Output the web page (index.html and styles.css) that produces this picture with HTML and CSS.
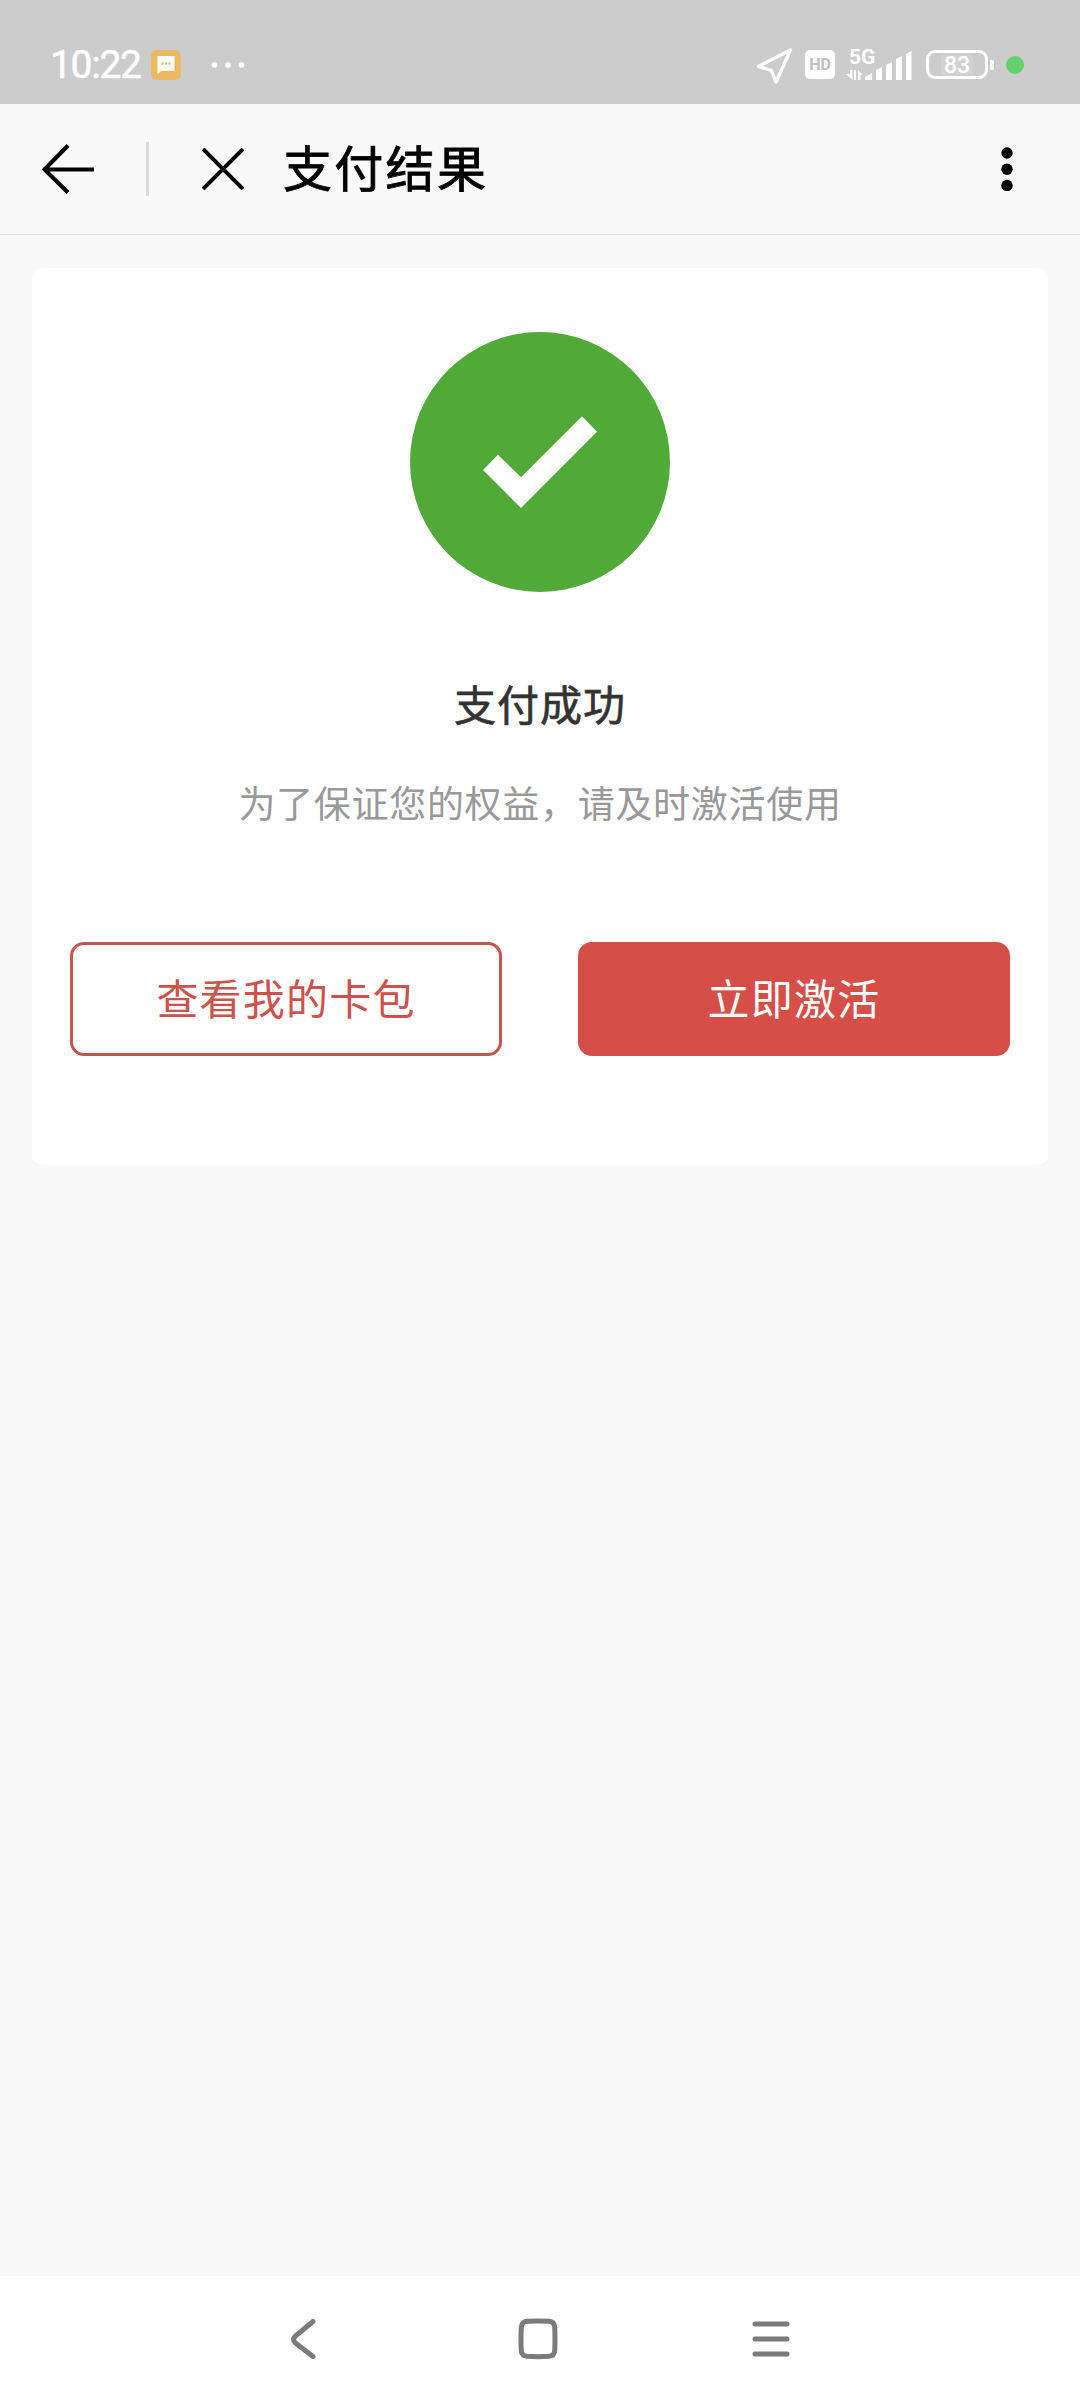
FILE: index.html
```html
<!DOCTYPE html>
<html lang="zh-CN">
<head>
<meta charset="utf-8">
<title>支付结果</title>
<link rel="stylesheet" href="styles.css">
</head>
<body>
<div class="screen">
  <div class="status">
    <span class="time">10:22</span>
    <svg class="message" width="30" height="30" viewBox="0 0 30 30"><rect width="30" height="30" rx="6" fill="#ebb960"/><path d="M6.5 6h17v15h-13l-4 3z" fill="#fff"/><g fill="#ddb978"><circle cx="11.5" cy="13.5" r="1.2"/><circle cx="15" cy="13.5" r="1.2"/><circle cx="18.5" cy="13.5" r="1.2"/></g></svg>
    <svg class="more-dots" width="34" height="8" viewBox="0 0 34 8" fill="#fff"><circle cx="3.5" cy="4" r="2.800"/><circle cx="17" cy="4" r="2.800"/><circle cx="30.500" cy="4" r="2.800"/></svg>
    <svg class="location" width="38" height="38" viewBox="0 0 38 38" fill="none" stroke="#fff" stroke-width="3.400" stroke-linejoin="round"><path d="M34.500 3L2.500 19.500L15.500 23.500L20 35Z"/></svg>
    <span class="hd">HD</span>
    <div class="network">
      <span class="generation">5G</span>
      <svg width="66" height="30" viewBox="0 0 66 30" fill="#fff"><path d="M4 19h2.500v10L0 23h4zM8 29V19h2v10zM12 29V19l5 5h-2.500v5z"/><path d="M19 29v-3l7-4v7zM30 29V19l6-3v13zM40 29V14l6-3v18zM50 29V8l6-3v24zM60 29V3l5.500-3v29z"/></svg>
    </div>
    <div class="battery"><span>83</span></div>
    <span class="tip"></span>
    <span class="indicator"></span>
  </div>
  <header class="header">
    <svg class="back" width="54" height="50" viewBox="0 0 54 50" fill="none" stroke="#000" stroke-width="4"><path d="M27 1.500L3.500 25.500L27 48.500M3.500 25.500H53"/></svg>
    <span class="divider"></span>
    <svg class="close" width="42" height="42" viewBox="0 0 42 42" stroke="#000" stroke-width="4"><path d="M1 1L41 41M41 1L1 41"/></svg>
    <h1 class="title">支付结果</h1>
    <svg class="menu" width="12" height="44" viewBox="0 0 12 44"><circle cx="6" cy="6" r="5.700"/><circle cx="6" cy="22.200" r="5.700"/><circle cx="6" cy="38.500" r="5.700"/></svg>
  </header>
  <main class="content">
    <section class="card">
      <svg class="success" width="260" height="260" viewBox="0 0 260 260"><circle cx="130" cy="130" r="130" fill="#51a937"/><path d="M73 138L88 122.700L111 145.300L172 84.300L187 99.700L111 176z" fill="#fff"/></svg>
      <h2 class="result">支付成功</h2>
      <p class="hint">为了保证您的权益，请及时激活使用</p>
      <div class="actions">
        <button class="button outline">查看我的卡包</button>
        <button class="button primary">立即激活</button>
      </div>
    </section>
  </main>
  <nav class="nav">
    <svg width="40" height="42" viewBox="0 0 40 42"><path d="M29 3.500L11.500 18Q7.500 21.500 11.500 25L29 38.500"/></svg>
    <svg width="42" height="42" viewBox="0 0 42 42"><path d="M10 3.300Q21 2.500 32 3.300Q37.200 3.800 37.700 9Q38.300 21 37.700 33Q37.200 37.800 32 38.300Q21 39 10 38.300Q4.800 37.800 4.300 33Q3.700 21 4.300 9Q4.800 3.800 10 3.300Z"/></svg>
    <svg width="40" height="42" viewBox="0 0 40 42"><path d="M4 6H36M4 21H36M4 36H36"/></svg>
  </nav>
</div>
</body>
</html>
```
FILE: styles.css
```css
* { box-sizing: border-box; }
body { margin: 0; font-family: "Noto Sans CJK SC", sans-serif; }
svg { display: block; flex-shrink: 0; }
.screen { width: 1080px; height: 2403px; display: flex; flex-direction: column; background: #f9f9f9; overflow: hidden; }
.status { height: 104px; padding: 25px 56px 0 50px; display: flex; align-items: center; background: #ccc; color: #fff; font-family: Roboto, sans-serif; }
.time { width: 101px; font-size: 39px; line-height: 40px; letter-spacing: -1.300px; font-weight: 400; -webkit-text-stroke: .5px #fff; }
.more-dots { margin-left: 30px; }
.location { margin-left: 511px; margin-top: 3px; }
.hd { width: 30px; height: 29px; margin-left: 11px; border-radius: 5px; background: #fff; color: #c0c0c0; font: 700 16px/29px Roboto, sans-serif; text-align: center; }
.network { width: 66px; height: 32px; margin-left: 11px; display: grid; align-items: end; }
.network > * { grid-area: 1 / 1; }
.generation { align-self: start; padding-left: 3px; font: 700 21px/16px Roboto, sans-serif; }
.battery { width: 62px; height: 29px; margin-left: 14px; border: 3px solid #fff; border-radius: 9px; display: flex; align-items: center; justify-content: center; font: 500 23px/24px Roboto, sans-serif; }
.battery span { background: #d2d2d2; padding: 0 3px; height: 20px; line-height: 21px; }
.tip { width: 4px; height: 10px; margin-left: 2px; border-radius: 0 2px 2px 0; background: #fff; }
.indicator { width: 18px; height: 18px; margin-left: 12px; border-radius: 50%; background: #65d16e; }
.header { height: 131px; padding: 0 67px 0 41px; display: flex; align-items: center; border-bottom: 1px solid #dedede; }
.divider { width: 3px; height: 54px; margin-left: 51px; background: #dadada; }
.close { margin-left: 53px; }
.title { margin: 0 auto 6px 39px; font-size: 49px; line-height: 72px; font-weight: 400; -webkit-text-stroke: .8px #000; letter-spacing: 2.300px; color: #000; }
.content { flex: 1; padding: 33px 32px; }
.card { height: 897px; padding: 64px 38px 0; display: flex; flex-direction: column; align-items: center; border-radius: 10px; background: #fff; }
.result { margin: 79px 0 0; font-size: 42px; line-height: 64px; font-weight: 400; -webkit-text-stroke: .7px #333; letter-spacing: 1px; color: #333; }
.hint { margin: 39px 0 0; font-size: 37px; line-height: 56px; letter-spacing: .700px; color: #999; white-space: nowrap; }
.actions { margin-top: 112px; width: 100%; display: flex; justify-content: space-between; }
.button { width: 432px; height: 114px; padding: 0 0 4px; border-radius: 14px; font-family: inherit; font-size: 42px; line-height: 60px; letter-spacing: 1.200px; }
.outline { border: 3px solid #c6554f; background: #fff; color: #cd524b; }
.primary { border: 0; background: #d54f48; color: #fff; }
.nav { height: 127px; padding: 42px 289px 0 284px; display: flex; justify-content: space-between; background: #fff; }
.nav svg { fill: none; stroke: #7b7b7b; stroke-width: 5; stroke-linecap: round; stroke-linejoin: round; }
```
